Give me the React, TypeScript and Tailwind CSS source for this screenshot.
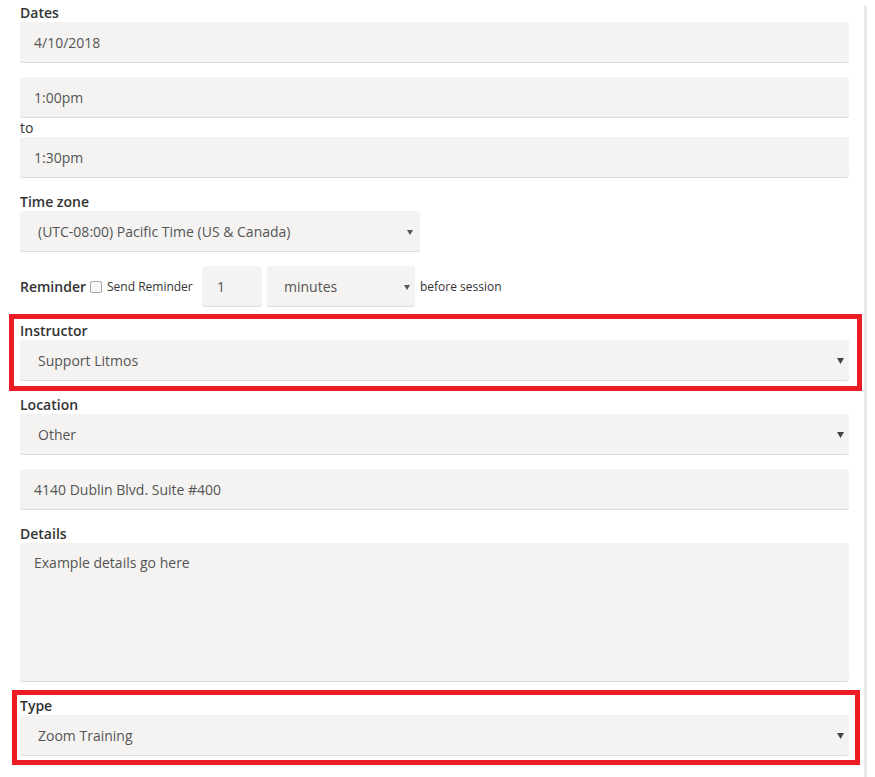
import React from "react";

const box =
  "rounded-[3px] bg-[#f4f3f1] text-sm text-[#555] shadow-[0_1px_0_#dcdbd8]";

function Label({ children }: { children: React.ReactNode }) {
  return (
    <div className="h-5 pt-px text-sm font-semibold leading-5 text-[#333]">
      {children}
    </div>
  );
}

function Arrow({ small }: { small?: boolean }) {
  return small ? (
    <svg width="6" height="5" viewBox="0 0 6 5" className="shrink-0">
      <path d="M0 0h6L3 5z" fill="#555" />
    </svg>
  ) : (
    <svg width="7" height="6" viewBox="0 0 7 6" className="shrink-0">
      <path d="M0 0h7L3.5 6z" fill="#444" />
    </svg>
  );
}

function TextBox({ value }: { value: string }) {
  return (
    <div className={`flex h-10 items-center pl-[14px] pt-[2px] leading-5 ${box}`}>
      {value}
    </div>
  );
}

function Select({
  value,
  className = "",
  arrowPad = "pr-[5px]",
  small,
}: {
  value: string;
  className?: string;
  arrowPad?: string;
  small?: boolean;
}) {
  return (
    <div
      className={`flex h-10 items-center justify-between pl-[18px] pt-[2px] leading-5 ${arrowPad} ${box} ${className}`}
    >
      <span>{value}</span>
      <Arrow small={small} />
    </div>
  );
}

function Highlight({ className }: { className: string }) {
  return (
    <div
      className={`pointer-events-none absolute border-[5px] border-[#ed1c24] ${className}`}
    />
  );
}

export default function App() {
  return (
    <div className="flex min-h-[777px] bg-white font-['Open_Sans',sans-serif]">
      <div className="w-[864px] pl-5 pr-[15px] pt-[2px]">
        <Label>Dates</Label>
        <TextBox value="4/10/2018" />
        <div className="mt-[15px]">
          <TextBox value="1:00pm" />
        </div>
        <div className="h-5 pt-px text-sm leading-5 text-[#333]">to</div>
        <TextBox value="1:30pm" />

        <div className="mt-[14px]">
          <Label>Time zone</Label>
          <Select
            value="(UTC-08:00) Pacific Time (US & Canada)"
            className="w-[400px]"
            arrowPad="pr-[7px]"
            small
          />
        </div>

        <div className="mt-[15px] flex h-10 items-center text-[#333]">
          <span className="w-[70px] pt-[2px] text-sm font-semibold leading-5">
            Reminder
          </span>
          <span className="flex w-[112px] items-center pt-[2px] text-xs leading-5">
            <span className="mr-[5px] inline-block h-[12px] w-[12px] rounded-[2px] border border-[#a9a9a9] bg-[#f7f7f7]" />
            Send Reminder
          </span>
          <div
            className={`flex h-10 w-[60px] items-center pl-[15px] pt-[2px] leading-5 ${box}`}
          >
            1
          </div>
          <div
            className={`ml-[5px] flex h-10 w-[148px] items-center justify-between pl-[17px] pr-[5px] pt-[2px] leading-5 ${box}`}
          >
            <span>minutes</span>
            <Arrow small />
          </div>
          <span className="ml-[5px] pt-[2px] text-xs leading-5">
            before session
          </span>
        </div>

        <div className="relative mt-[14px]">
          <Highlight className="-left-[11px] -right-[13px] -top-[6px] -bottom-[11px]" />
          <Label>Instructor</Label>
          <Select value="Support Litmos" />
        </div>

        <div className="mt-[14px]">
          <Label>Location</Label>
          <Select value="Other" />
        </div>
        <div className="mt-[15px]">
          <TextBox value="4140 Dublin Blvd. Suite #400" />
        </div>

        <div className="mt-[14px]">
          <Label>Details</Label>
          <textarea
            readOnly
            defaultValue="Example details go here"
            className={`block h-[138px] w-full resize-none px-[14px] pt-[10px] leading-5 outline-none ${box}`}
          />
        </div>

        <div className="relative mt-[14px]">
          <Highlight className="-left-[8px] -right-[11px] -top-[5px] -bottom-[10px]" />
          <Label>Type</Label>
          <Select value="Zoom Training" />
        </div>
      </div>
      <div className="mt-[6px] w-[3px] bg-[#e8e8e8]" />
    </div>
  );
}
